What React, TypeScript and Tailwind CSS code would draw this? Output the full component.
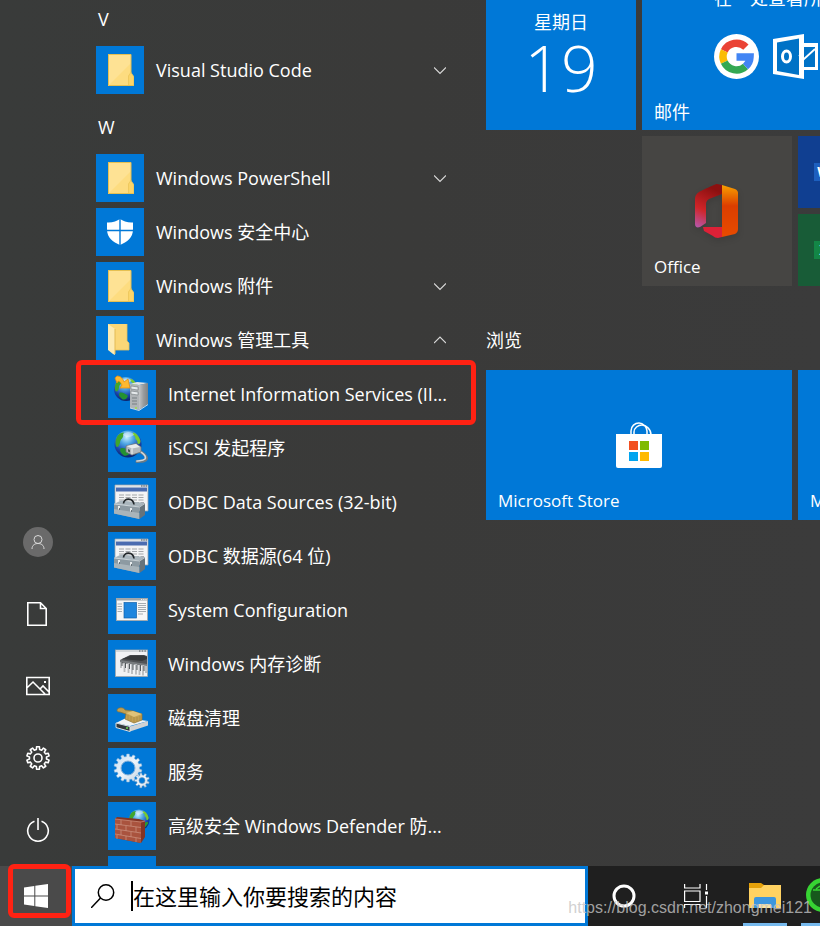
import type { ReactNode } from "react";

// ── Types ───────────────────────────────────────────────────────────────────
interface AppEntry {
  label: string;
  icon: ReactNode;
  state?: "open" | "closed";
  nested?: boolean;
  marked?: boolean;
}

// ── Helpers ─────────────────────────────────────────────────────────────────
function gearPath(cx: number, cy: number, outer: number, inner: number, teeth: number) {
  const pts: string[] = [];
  const step = (Math.PI * 2) / teeth;
  for (let i = 0; i < teeth; i++) {
    const a = i * step + step / 2;
    for (const [off, r] of [[-0.3, inner], [-0.2, outer], [0.2, outer], [0.3, inner]]) {
      const t = a + off * step;
      pts.push(`${(cx + r * Math.cos(t)).toFixed(2)} ${(cy + r * Math.sin(t)).toFixed(2)}`);
    }
  }
  return `M${pts.join("L")}Z`;
}

// ── App icons (48 × 48) ─────────────────────────────────────────────────────
function Tile48({ children }: { children?: ReactNode }) {
  return (
    <svg viewBox="0 0 48 48" className="size-12 shrink-0 bg-[#0078d7]" aria-hidden="true">
      {children}
    </svg>
  );
}

function Folder() {
  return (
    <Tile48>
      <rect x="12" y="8" width="23" height="32" fill="#fee294" />
      <path d="M12 40 35 17V40Z" fill="#fddc80" />
      <path d="M32 40V30L34.500 26 38 30.500V40Z" fill="#fbd569" />
      <path d="M12.500 8V39.500H38M12 8.500H35V27" fill="none" stroke="#e6c052" />
      <path d="M32.500 39V30L35 26.500 37.500 30.500V39" fill="none" stroke="#e9c45c" strokeWidth=".7" />
    </Tile48>
  );
}

function FolderOpen() {
  return (
    <Tile48>
      <path d="M12 8H31V25L33 27V34H12Z" fill="#fbd777" />
      <path d="M31 8V25L33 27V34H19" fill="none" stroke="#e9c25b" strokeWidth=".8" />
      <path d="M12 8 19 13V39L17 38 12 34Z" fill="#fdebb2" />
      <path d="M19 13V38" stroke="#e3bb56" />
    </Tile48>
  );
}

function Shield() {
  return (
    <Tile48>
      <path d="M24 11C21 13 16 15 11 14.500V21C11 30 17 34 24 37 31 34 37 30 37 21V14.500C32 15 27 13 24 11Z" fill="#fff" />
      <path d="M24 10V38M10 22.500H38" stroke="#0078d7" strokeWidth="1.400" />
    </Tile48>
  );
}

function Globe({ cx, cy, r, id }: { cx: number; cy: number; r: number; id: string }) {
  return (
    <g>
      <defs>
        <radialGradient id={id} cx=".45" cy=".25" r=".75">
          <stop offset="0" stopColor="#c9f1ff" />
          <stop offset=".35" stopColor="#4ba3e3" />
          <stop offset=".7" stopColor="#1b48ae" />
          <stop offset="1" stopColor="#0c2168" />
        </radialGradient>
      </defs>
      <circle cx={cx} cy={cy} r={r} fill={`url(#${id})`} />
      <g transform={`translate(${cx} ${cy}) scale(${r / 13})`}>
        <path d="M-10-8C-8-10-6-11-4-11-5-9-4-7-6-5-8-4-7-1-9 2-11 4-12 2-12-1-12-4-11-6-10-8Z" fill="#3fa62c" />
        <path d="M5-11C9-10 11-6 12-3 12 0 10 1 9-1 10-4 6-4 7-7 5-8 4-9 5-11Z" fill="#77cb31" />
        <path d="M-7 4C-4 3-1 5 2 7 2 10-1 12-4 11-6 9-9 7-7 4Z" fill="#239132" />
        <path d="M8 3C10 2 11.500 3 11.500 4L7 10C6 8 6 5 8 3Z" fill="#2d9a30" />
        <path d="M-5-9C-2-12.500 3-12.500 6-9 2-6-2-6-5-9Z" fill="#fff" opacity=".4" />
      </g>
    </g>
  );
}

function Iis() {
  return (
    <Tile48>
      <defs>
        <linearGradient id="tower" x1="0" x2="1">
          <stop offset="0" stopColor="#c2c5c7" />
          <stop offset=".5" stopColor="#999c9e" />
          <stop offset="1" stopColor="#7e8284" />
        </linearGradient>
      </defs>
      <Globe cx={18} cy={19} r={12} id="globe-iis" />
      <path d="M7 8 9 6C13 6 15 9 16 12L20 9 22 18 12 18 14 15C12 11 10 10 9 13Z" fill="#ffb930" stroke="#e98d0c" strokeWidth=".8" />
      <path d="M22 14 29 12 40 13 31 15Z" fill="#e3e5e6" />
      <path d="M31 15 40 13V34L31 40Z" fill="url(#tower)" />
      <path d="M22 14 31 15V40L22 38Z" fill="#b0b4b7" />
      <path d="M23 16 30 17V20L23 19ZM23 21 30 22V25L23 24Z" fill="#e6eaec" stroke="#60686d" strokeWidth=".5" />
      <path d="M24 28H29M24 31H29M24 34H29" stroke="#777e82" />
      <circle cx="28" cy="38" r="1" fill="#9bdf4b" />
      <path d="M22 38 31 40.500 40 34.500" fill="none" stroke="#eceeef" strokeWidth=".8" />
    </Tile48>
  );
}

function Iscsi() {
  return (
    <Tile48>
      <Globe cx={20} cy={20} r={13.5} id="globe-iscsi" />
      <path d="M30 27C35 28 40 33 38 35.500 36 38 32 37 29 37.500" fill="none" stroke="#6b7a84" strokeWidth="3" strokeLinecap="round" />
      <path d="M30 26.500C34 28 39 32 37 35 35 37 32 36.500 29 37" fill="none" stroke="#d2d9dc" strokeWidth="1.600" strokeLinecap="round" />
      <path d="M18 22 28 19.500 33 23V28L24 31 18 28Z" fill="#b4babd" stroke="#6e767a" strokeWidth=".8" />
      <path d="M18.500 22 28 20 32 23 24 24.500Z" fill="#e9ecec" />
      <path d="M24 24.500V30.500" stroke="#f3f5f5" />
      <path d="M20 25 22 26V28.500L20 27.500Z" fill="#4b5457" />
    </Tile48>
  );
}

function Odbc() {
  return (
    <Tile48>
      <path d="M7 7H40V33H7Z" fill="#f3f4f5" stroke="#9aa1a8" strokeWidth=".8" />
      <path d="M7.500 8H39.500" stroke="#cdd3d8" />
      <path d="M33 8H39" stroke="#3f4a55" strokeDasharray="1.500 .8" />
      <rect x="8" y="9.500" width="31" height="4" fill="#4a6cb0" />
      <path d="M11 17H36M11 19.500H36M11 22H36M26 24.500H36M34 27H36" stroke="#9b9ea2" strokeDasharray="5 1.500" strokeWidth=".9" />
      <path d="M6 26 13 22.500 37 25 31.500 29Z" fill="#aab6bd" />
      <path d="M6 26 31.500 28.500V41L6 35.500Z" fill="#8d9aa2" />
      <path d="M6 31 31.500 35V41L6 35.500Z" fill="#a9b4ba" />
      <path d="M31.500 28.500 37 25V37L31.500 41Z" fill="#66737b" />
      <path d="M6 26 31.500 29 37 25.500" fill="none" stroke="#dce4e7" strokeWidth=".7" />
      <path d="M15.500 25.500C16 19.500 25 19.500 26 26.500" fill="none" stroke="#23282b" strokeWidth="1.700" />
      <path d="M11 28V31.500M23 30V33.500" stroke="#f1f4f5" strokeWidth="1.800" />
      <path d="M11.500 30V32M23.500 32V34" stroke="#4b565c" strokeWidth=".8" />
    </Tile48>
  );
}

function SysConfig() {
  return (
    <Tile48>
      <rect x="8.500" y="12.500" width="31" height="22" fill="#f6f7f7" stroke="#a3a9ad" strokeWidth=".9" />
      <path d="M8 13.500H40" stroke="#9fa5a8" strokeWidth="2" />
      <path d="M33 13.500H39" stroke="#f2f2f2" strokeDasharray="1.200 1" />
      <rect x="16" y="16.500" width="12.500" height="15.500" fill="#1e86de" stroke="#1262ab" strokeWidth=".7" />
      <path d="M9.500 18H14M9.500 20.500H14M9.500 23H14M9.500 25.500H14M30 17.500H38M30 19.500H38M30 21.500H38M30 23.500H38M30 25.500H38M30 28H35" stroke="#9ca3a8" strokeWidth=".9" />
    </Tile48>
  );
}

function Memory() {
  return (
    <Tile48>
      <rect x="7.500" y="10" width="32" height="26.500" fill="#f1f2f4" stroke="#a3a8ac" strokeWidth=".8" />
      <path d="M8 11H39" stroke="#d3d7da" strokeWidth="2" />
      <path d="M31 11H38" stroke="#4e565b" strokeDasharray="1.500 1.200" />
      <path d="M12 20 22 15H36L39 16V24L34 24.500 12 22Z" fill="#505356" />
      <path d="M14 19 23 15.500H36L39 17V19L34 21Z" fill="#35383a" />
      <path d="M12 20 39 24V26L12 23Z" fill="#777b7e" />
      <path d="M13 22V28M16.500 23V32M20.500 23V33M24 24V34M28 24V34.500M31.500 25V35M35 25V35.500M38 26V33" stroke="#b7babd" strokeWidth="1.800" />
      <path d="M14 22V26M17.500 23V28M21.500 24V29M25 24V30M29 25V30M32.500 25V31M36 26V31" stroke="#44494d" strokeWidth=".9" />
    </Tile48>
  );
}

function DiskCleanup() {
  return (
    <Tile48>
      <path d="M8 29 18 24 40 27 22 32Z" fill="#f2f4f5" />
      <path d="M8 29 22 32.500V37.500L8 33.500Z" fill="#33383b" />
      <path d="M22 32.500 40 27V31.500L22 37.500Z" fill="#cfd2d4" />
      <path d="M8 29 22 32.500V37.500L8 33.500Z" fill="none" stroke="#dde1e3" />
      <circle cx="19" cy="34" r="1" fill="#67db50" />
      <path d="M9 16C10 13 16 13 17 16L25 17 34 20V26L26 29 17 25 18 20 12 18C10 18 9 17.500 9 16Z" fill="#c2a052" stroke="#8f722f" strokeWidth=".7" />
      <path d="M18 19 25 17 34 20 26 23Z" fill="#dfc279" />
      <path d="M20 21V26M23 22V27M26 23V28.500M29 23V27.500M32 22V26.500" stroke="#a38542" strokeWidth=".6" />
    </Tile48>
  );
}

function Services() {
  return (
    <Tile48>
      <defs>
        <linearGradient id="gear" x1="0" y1="0" x2="1" y2="1">
          <stop offset="0" stopColor="#c3dcf3" />
          <stop offset=".5" stopColor="#eef5fb" />
          <stop offset="1" stopColor="#bccfdf" />
        </linearGradient>
      </defs>
      <path d={gearPath(20, 20, 14, 11.5, 14)} fill="url(#gear)" stroke="#97bbdb" strokeWidth=".5" />
      <circle cx="20" cy="20" r="7" fill="#0078d7" stroke="#86b1d8" />
      <path d={gearPath(34, 32.5, 7.5, 5.5, 9)} fill="url(#gear)" stroke="#5f91bd" strokeWidth=".5" />
      <circle cx="34" cy="32.500" r="3" fill="#0078d7" stroke="#7297b8" strokeWidth=".6" />
    </Tile48>
  );
}

function Firewall() {
  return (
    <Tile48>
      <Globe cx={31} cy={18} r={10.5} id="globe-fw" />
      <path d="M7 17 9 15 31 17 37 19V35L33 41 7 36Z" fill="#843424" />
      <path d="M7 17 33 20V41L7 36Z" fill="#a9533e" />
      <path d="M7 22 33 25.500M7 27 33 31M7 32 33 36.500M13 18V23M23 19V24M9 22V27M18 24V29M28 25V30M13 28V33M23 30V35M9 33V37M18 34V38M28 36V40" stroke="#cf9784" strokeWidth=".7" />
      <path d="M7 17 33 20 37 19" fill="none" stroke="#cc8a76" strokeWidth=".8" />
    </Tile48>
  );
}

// ── Data ────────────────────────────────────────────────────────────────────
const V_APPS: AppEntry[] = [{ label: "Visual Studio Code", icon: <Folder />, state: "closed" }];

const W_APPS: AppEntry[] = [
  { label: "Windows PowerShell", icon: <Folder />, state: "closed" },
  { label: "Windows 安全中心", icon: <Shield /> },
  { label: "Windows 附件", icon: <Folder />, state: "closed" },
  { label: "Windows 管理工具", icon: <FolderOpen />, state: "open" },
  { label: "Internet Information Services (II...", icon: <Iis />, nested: true, marked: true },
  { label: "iSCSI 发起程序", icon: <Iscsi />, nested: true },
  { label: "ODBC Data Sources (32-bit)", icon: <Odbc />, nested: true },
  { label: "ODBC 数据源(64 位)", icon: <Odbc />, nested: true },
  { label: "System Configuration", icon: <SysConfig />, nested: true },
  { label: "Windows 内存诊断", icon: <Memory />, nested: true },
  { label: "磁盘清理", icon: <DiskCleanup />, nested: true },
  { label: "服务", icon: <Services />, nested: true },
  { label: "高级安全 Windows Defender 防...", icon: <Firewall />, nested: true },
  { label: "", icon: <Tile48 />, nested: true },
];

// ── App list ────────────────────────────────────────────────────────────────
function AppRow({ entry }: { entry: AppEntry }) {
  return (
    <li className={entry.nested ? "relative pl-3" : "relative"}>
      <button
        type="button"
        aria-label={entry.label || "更多"}
        aria-expanded={entry.state ? entry.state === "open" : undefined}
        className="flex h-12 w-full items-center gap-3 text-left"
      >
        {entry.icon}
        <span className="flex-1 whitespace-nowrap">{entry.label}</span>
        {entry.state && (
          <svg viewBox="0 0 12 12" className="mr-4 size-3" fill="none" stroke="#d8d8d8" strokeWidth="1.200" aria-hidden="true">
            <path d={entry.state === "open" ? "M0 9 6 3 12 9" : "M0 3.500 6 9.500 12 3.500"} />
          </svg>
        )}
      </button>
      {entry.marked && (
        <span className="pointer-events-none absolute -top-2.5 -right-3.5 -bottom-[7px] -left-5 z-10 rounded-md border-5 border-[#ff2213]" />
      )}
    </li>
  );
}

function AppList() {
  return (
    <nav aria-label="应用列表" className="w-[366px] shrink-0 text-lg">
      <h2 className="flex h-[38px] items-center pl-0.5">V</h2>
      <ul className="mt-2 flex flex-col gap-1.5">
        {V_APPS.map(entry => <AppRow key={entry.label} entry={entry} />)}
      </ul>
      <h2 className="mt-1.5 flex h-12 items-center pt-1.5 pl-0.5">W</h2>
      <ul className="mt-1.5 flex flex-col gap-1.5">
        {W_APPS.map(entry => <AppRow key={entry.label} entry={entry} />)}
      </ul>
    </nav>
  );
}

// ── Left rail ───────────────────────────────────────────────────────────────
function RailButton({ label, children }: { label: string; children: ReactNode }) {
  return (
    <button type="button" aria-label={label} className="flex h-18 w-full items-center justify-center">
      {children}
    </button>
  );
}

function Rail() {
  const line = { fill: "none", stroke: "#fff", strokeWidth: 1.6, viewBox: "0 0 24 24", className: "size-6" };
  return (
    <aside className="mr-5 flex w-19 shrink-0 flex-col justify-end">
      <RailButton label="用户">
        <svg viewBox="0 0 30 30" className="size-7.5" fill="none" stroke="#dadada">
          <circle cx="15" cy="15" r="15" fill="#6a6a6a" stroke="none" />
          <circle cx="15" cy="12.500" r="4" />
          <path d="M9 22C9 18 12 16.500 15 16.500S21 18 21 22" />
        </svg>
      </RailButton>
      <RailButton label="文档">
        <svg {...line}>
          <path d="M1.800 .8H14.500L20.200 6.500V23.200H1.800ZM14.500 .8V6.500H20.200" />
        </svg>
      </RailButton>
      <RailButton label="图片">
        <svg {...line}>
          <path d="M.8 3.500H23.200V20.500H.8ZM.8 14 7 8 19 20M14 15 17 12 23 18" />
          <path d="M18 8H20" strokeWidth="2" />
        </svg>
      </RailButton>
      <RailButton label="设置">
        <svg {...line}>
          <path d={gearPath(12, 12, 11.3, 8.6, 10)} strokeLinejoin="round" />
          <circle cx="12" cy="12" r="4" />
        </svg>
      </RailButton>
      <RailButton label="电源">
        <svg {...line}>
          <path d="M12 0V12M8.500 3.200A10.300 10.300 0 1 0 15.500 3.200" />
        </svg>
      </RailButton>
    </aside>
  );
}

// ── Live tiles ──────────────────────────────────────────────────────────────
function GoogleLogo() {
  return (
    <svg viewBox="0 0 45 45" className="size-[45px] shrink-0" fill="none" strokeWidth="7.500">
      <circle cx="22.500" cy="22.500" r="22.500" fill="#fff" />
      <path d="M31.900 13.100A13.500 13.500 0 0 0 10.300 16.800" stroke="#ea4335" />
      <path d="M10.300 16.800A13.500 13.500 0 0 0 10.300 28.200" stroke="#fbbc05" />
      <path d="M10.300 28.200A13.500 13.500 0 0 0 31.500 32.500" stroke="#34a853" />
      <path d="M31.500 32.500A13.500 13.500 0 0 0 36 23H22.500" stroke="#4285f4" />
    </svg>
  );
}

function OutlookLogo() {
  return (
    <svg viewBox="0 0 45 45" className="size-[45px] shrink-0">
      <path d="M0 5 31 0V9H45V36H31V45L0 40Z" fill="#fff" />
      <path d="M4 8.500 26 4.500V41L4 37ZM31 13H42V33H31Z" fill="#0072c6" />
      <path d="M26 21 31 25 42 15" fill="none" stroke="#fff" strokeWidth="1.800" />
      <ellipse cx="13.500" cy="22.500" rx="4" ry="5.500" fill="none" stroke="#fff" strokeWidth="3" />
    </svg>
  );
}

function OfficeLogo() {
  return (
    <svg viewBox="0 0 44 54" className="h-[54px] w-11 drop-shadow-md">
      <defs>
        <linearGradient id="office-r" x1="0" y1="0" x2="0" y2="1">
          <stop offset="0" stopColor="#f8a000" />
          <stop offset=".4" stopColor="#dc3e00" />
          <stop offset="1" stopColor="#e84b00" />
        </linearGradient>
        <linearGradient id="office-l" x1="0" y1="1" x2=".3" y2="0">
          <stop offset="0" stopColor="#b65ab0" />
          <stop offset=".45" stopColor="#cf2428" />
          <stop offset="1" stopColor="#8c1010" />
        </linearGradient>
      </defs>
      <path d="M27 1 22 0C20 0 6 7 4 8 1 10 0 12 0 15V40C0 43 2 44 5 43L11 39V20C11 18 12 16 14 15L27 10Z" fill="url(#office-l)" />
      <path d="M27 1 40 5C42 6 43 7 43 9V45C43 47 42 49 40 50L27 53Z" fill="url(#office-r)" />
      <path d="M8 43H27V53L23 54C21 54 19 53 18 52L9 47Z" fill="#dd2137" />
    </svg>
  );
}

function StoreLogo() {
  return (
    <svg viewBox="0 0 46 46" className="size-[46px]">
      <path d="M15 13V9C15 4 19 1 23 1S31 5 31 9V13M18 13V10C18 6 22 3 26 3S35 7 35 13" fill="none" stroke="#fff" strokeWidth="1.500" />
      <path d="M0 12H46V44Q46 46 44 46H2Q0 46 0 44Z" fill="#fff" />
      <rect x="13" y="19" width="9" height="9" fill="#f25022" />
      <rect x="24" y="19" width="9" height="9" fill="#7fba00" />
      <rect x="13" y="30" width="9" height="9" fill="#00a4ef" />
      <rect x="24" y="30" width="9" height="9" fill="#ffb900" />
    </svg>
  );
}

const TILE_GRID = "grid auto-rows-[72px] grid-cols-[repeat(8,72px)] gap-1.5";
const TILE_LABEL = "absolute bottom-1.5 left-3 text-[17px] whitespace-nowrap";

function Tiles() {
  return (
    <section aria-label="磁贴" className="-mt-5 min-w-0 flex-1 text-lg">
      <div className={TILE_GRID}>
        <button type="button" className="col-span-2 row-span-2 flex flex-col items-center bg-[#0078d7] pt-7">
          <span className="leading-7">星期日</span>
          <span className="text-[64px] leading-16 font-light">19</span>
        </button>
        <button type="button" className="relative col-span-4 row-span-2 flex flex-col items-center bg-[#0078d7] pt-1.5">
          <span className="leading-6">在一处查看所有邮件</span>
          <span className="mt-6 flex gap-3.5">
            <GoogleLogo />
            <OutlookLogo />
            <span className="size-[45px] rounded-full bg-white" />
          </span>
          <span className="absolute bottom-1 left-3">邮件</span>
        </button>
        <button type="button" className="relative col-span-2 col-start-3 row-span-2 flex items-center justify-center bg-[#464543]">
          <OfficeLogo />
          <span className={TILE_LABEL}>Office</span>
        </button>
        <button type="button" aria-label="Word" className="flex items-center bg-[#103f91] pl-4">
          <span className="flex h-[18px] w-5 items-center justify-center bg-[#1d5fbf] text-sm font-bold">W</span>
        </button>
        <button type="button" aria-label="Excel" className="col-start-5 row-start-4 flex items-center bg-[#185c37] pl-4">
          <span className="flex h-[18px] w-5 items-center justify-center bg-[#138646] text-sm font-bold">X</span>
        </button>
      </div>
      <h2 className="mt-10 leading-7">浏览</h2>
      <div className={`${TILE_GRID} mt-4`}>
        <button type="button" className="relative col-span-4 row-span-2 flex items-center justify-center bg-[#0078d7]">
          <StoreLogo />
          <span className={TILE_LABEL}>Microsoft Store</span>
        </button>
        <button type="button" className="relative col-span-4 row-span-2 bg-[#0078d7]">
          <span className={TILE_LABEL}>Microsoft Edge</span>
        </button>
      </div>
    </section>
  );
}

// ── Taskbar ─────────────────────────────────────────────────────────────────
function Taskbar() {
  return (
    <footer className="relative flex h-15 shrink-0 bg-[#1f1f1f]">
      <button type="button" aria-label="开始" className="relative flex w-18 shrink-0 items-center justify-center bg-[#4a4a4a]">
        <svg viewBox="0 0 24 24" className="size-6" fill="#fff">
          <path d="M0 3.500 10.300 2V11.500H0ZM11.300 1.800 24 0V11.500H11.300ZM0 12.500H10.300V22L0 20.500ZM11.300 12.500H24V24L11.300 22.200Z" />
        </svg>
        <span className="pointer-events-none absolute -top-0.5 right-px bottom-2 left-2 z-10 rounded-md border-5 border-[#ff2213]" />
      </button>
      <label className="flex w-[516px] shrink-0 items-center border-3 border-[#0078d7] bg-white pl-4 text-black">
        <svg viewBox="0 0 24 24" className="size-6" fill="none" stroke="#000" strokeWidth="1.500">
          <circle cx="15" cy="8.500" r="7.700" />
          <path d="M9.500 14 0 24" />
        </svg>
        <span className="ml-4 h-7.5 w-0.5 bg-black" />
        <input
          type="text"
          aria-label="搜索"
          placeholder="在这里输入你要搜索的内容"
          className="min-w-0 flex-1 text-[22px] outline-none placeholder:text-black placeholder:opacity-100"
        />
      </label>
      <button type="button" aria-label="Cortana" className="flex w-18 shrink-0 items-center justify-center">
        <svg viewBox="0 0 24 24" className="size-6" fill="none" stroke="#fff" strokeWidth="3">
          <circle cx="12" cy="12" r="10" />
        </svg>
      </button>
      <button type="button" aria-label="任务视图" className="mr-1 flex w-18 shrink-0 items-center justify-center">
        <svg viewBox="0 0 24 24" className="size-6" fill="none" stroke="#fff" strokeWidth="1.200">
          <path d="M.6 0V4H16V0M.6 7H16V17.500H.6ZM.6 24V20.500H16V24M22.500 0V6M22.500 12V24" />
          <path d="M21 9H24" strokeWidth="3" />
        </svg>
      </button>
      <button type="button" aria-label="文件资源管理器" className="flex w-[58px] shrink-0 flex-col items-center justify-between pt-4">
        <svg viewBox="0 0 32 28" className="h-7 w-8">
          <path d="M0 1H12L15 3V10H0Z" fill="#e5a10a" />
          <path d="M0 6H12L15 3H32V26H0Z" fill="#ffd262" />
          <path d="M5 26V17Q5 15 7 15H25Q27 15 27 17V26H22V22H10V26Z" fill="#3d96de" />
          <path d="M10 22H22V26H10Z" fill="#fbe4a0" />
        </svg>
        <span className="h-[3px] w-11 bg-[#76b9ed]" />
      </button>
      <button type="button" aria-label="浏览器" className="flex w-[58px] shrink-0 flex-col items-center justify-between pt-3">
        <svg viewBox="0 0 34 34" className="size-[34px]">
          <circle cx="17" cy="17" r="17" fill="#37d433" />
          <circle cx="17" cy="17" r="12.500" fill="#17591c" />
          <path d="M7 12H15V7M10 11 14 8" fill="none" stroke="#37d433" strokeWidth="1.500" />
        </svg>
        <span className="h-[3px] w-11 bg-[#76b9ed]" />
      </button>
      <span className="pointer-events-none absolute right-2 bottom-1.5 z-20 font-['Liberation_Sans'] text-base whitespace-nowrap text-[#c4c4c4]/80">
        https://blog.csdn.net/zhongmei121
      </span>
    </footer>
  );
}

export default function App() {
  return (
    <div className="flex h-screen flex-col overflow-hidden bg-[#3a3a3a] font-['Open_Sans','Noto_Sans_CJK_SC',sans-serif] text-white">
      <main className="flex min-h-0 flex-1 overflow-hidden bg-linear-to-r from-[#393b3a] via-[#3a3a39] to-[#3b3b3b]">
        <Rail />
        <AppList />
        <div className="ml-6 min-w-0 flex-1 overflow-hidden">
          <Tiles />
        </div>
      </main>
      <Taskbar />
    </div>
  );
}
